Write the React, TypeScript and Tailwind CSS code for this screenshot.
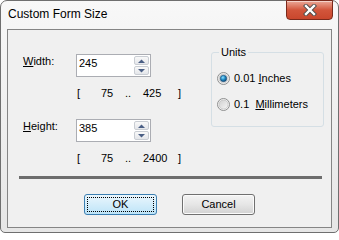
import type { ReactNode } from "react";

function SpinArrow({ up }: { up?: boolean }) {
  return (
    <svg width="7" height="4" viewBox="0 0 7 4">
      <path d={up ? "M0 4 L3.5 0.5 L7 4 Z" : "M0 0 L3.5 3.5 L7 0 Z"} fill="#4a5f85" />
    </svg>
  );
}

function Spinner({ value }: { value: string }) {
  return (
    <div className="flex h-[23px] w-[75px] border border-[#abadb3] bg-white">
      <div className="flex-1 pl-[2px] pt-[2px]">{value}</div>
      <div className="flex w-[16px] flex-col gap-px py-px pr-px">
        <div className="flex flex-1 items-center justify-center rounded-[2px] border border-[#c9cdd3] bg-gradient-to-b from-[#f9f9f9] to-[#e4e6ea]">
          <SpinArrow up />
        </div>
        <div className="flex flex-1 items-center justify-center rounded-[2px] border border-[#c9cdd3] bg-gradient-to-b from-[#f9f9f9] to-[#e4e6ea]">
          <SpinArrow />
        </div>
      </div>
    </div>
  );
}

function Range({ min, max }: { min: string; max: string }) {
  return (
    <div className="flex pl-[54px]">
      <span className="w-[24px]">[</span>
      <span className="w-[24px]">{min}</span>
      <span className="w-[18px]">..</span>
      <span className="w-[35px]">{max}</span>
      <span>]</span>
    </div>
  );
}

function Radio({ checked, children }: { checked?: boolean; children: ReactNode }) {
  return (
    <div className="flex h-[13px] items-center gap-[4px]">
      <svg width="13" height="13" viewBox="0 0 13 13">
        <defs>
          <linearGradient id="rg-off" x1="0" y1="0" x2="1" y2="1">
            <stop offset="0" stopColor="#cfcfcf" />
            <stop offset="1" stopColor="#f7f7f7" />
          </linearGradient>
          <radialGradient id="rg-on" cx="0.4" cy="0.35" r="0.7">
            <stop offset="0" stopColor="#8fe0ff" />
            <stop offset="0.5" stopColor="#1f8ac4" />
            <stop offset="1" stopColor="#0b3e6a" />
          </radialGradient>
        </defs>
        <circle cx="6.5" cy="6.5" r="6" fill="#f4f4f4" stroke="#8e8f8f" />
        <circle cx="6.5" cy="6.5" r="4.5" fill="url(#rg-off)" stroke="#b9b9b9" strokeWidth="0.6" />
        {checked && <circle cx="6.5" cy="6.5" r="3.2" fill="url(#rg-on)" stroke="#1d4e78" strokeWidth="0.6" />}
      </svg>
      <span className="whitespace-pre">{children}</span>
    </div>
  );
}

export default function App() {
  return (
    <div className="h-[235px] w-[339px] bg-white font-['Liberation_Sans',Arial,sans-serif] text-[11px] leading-[13px] text-black">
      <div className="flex h-[233px] flex-col rounded-t-[7px] rounded-b-[5px] border border-[#6f6f6f] bg-gradient-to-b from-[#f8f8f8] to-[#e6e6e6] px-[6px] pb-[4px]">
        <div className="flex h-[28px] items-start justify-between">
          <div className="pl-[1px] pt-[6px] text-[12px] leading-[14px] [text-shadow:0_0_6px_#ffffff]">Custom Form Size</div>
          <div className="-mr-px -mt-px flex h-[20px] w-[47px] items-center justify-center rounded-b-[4px] border border-[#7a2a1c] bg-gradient-to-b from-[#eaa898] via-[#d2553b] to-[#c9472d] shadow-[inset_0_1px_0_rgba(255,255,255,0.5)]">
            <svg width="14" height="12" viewBox="0 0 14 12">
              <path d="M3 2 L11 10 M11 2 L3 10" stroke="#4b4b4b" strokeWidth="4.2" strokeLinecap="square" />
              <path d="M3 2 L11 10 M11 2 L3 10" stroke="#ffffff" strokeWidth="2.4" strokeLinecap="square" />
            </svg>
          </div>
        </div>

        <div className="flex flex-1 flex-col border border-[#858585] bg-[#f0f0f0]">
          <div className="flex">
            <div className="w-[203px] pl-[15px] pt-[24px]">
              <div className="flex items-start">
                <div className="w-[53px] pt-[1px]">
                  <span className="underline">W</span>idth:
                </div>
                <Spinner value="245" />
              </div>
              <div className="mt-[10px]">
                <Range min="75" max="425" />
              </div>
              <div className="mt-[19px] flex items-start">
                <div className="w-[53px] pt-[1px]">
                  <span className="underline">H</span>eight:
                </div>
                <Spinner value="385" />
              </div>
              <div className="mt-[10px]">
                <Range min="75" max="2400" />
              </div>
            </div>

            <div className="relative mt-[22px] h-[75px] w-[113px] rounded-[3px] border border-[#d5dfe5]">
              <span className="absolute left-[7px] top-[-7px] bg-[#f0f0f0] px-[2px]">Units</span>
              <div className="flex flex-col gap-[13px] pl-[5px] pt-[19px]">
                <Radio checked>
                  0.01 <span className="underline">I</span>nches
                </Radio>
                <Radio>
                  0.1  <span className="underline">M</span>illimeters
                </Radio>
              </div>
            </div>
          </div>

          <div className="ml-[11px] mt-[11px] h-[3px] w-[303px] bg-[#6d6d6d]" />

          <div className="mt-[15px] flex gap-[25px] pl-[76px]">
            <button className="flex h-[21px] w-[73px] items-center justify-center rounded-[3px] border border-[#3c7fb1] bg-gradient-to-b from-[#eaf6fd] to-[#bde4f8] p-[2px]">
              <span className="flex h-full w-full items-center justify-center border border-dotted border-black">OK</span>
            </button>
            <button className="flex h-[21px] w-[73px] items-center justify-center rounded-[3px] border border-[#707070] bg-gradient-to-b from-[#f4f4f4] via-[#e6e6e6] to-[#d2d2d2] shadow-[inset_0_0_0_1px_#fbfbfb]">
              Cancel
            </button>
          </div>
        </div>
      </div>
    </div>
  );
}
